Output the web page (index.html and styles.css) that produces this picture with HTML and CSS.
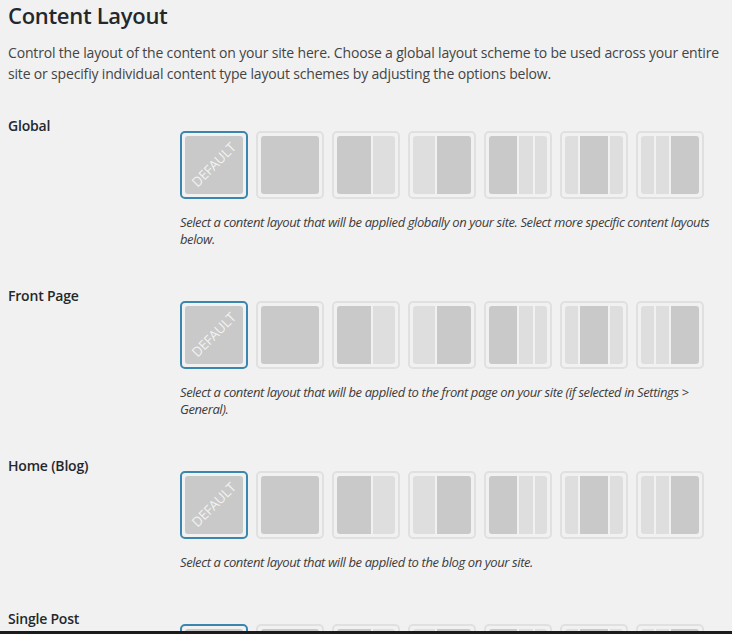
FILE: index.html
```html
<!DOCTYPE html>
<html>
<head>
<meta charset="utf-8">
<link rel="stylesheet" href="styles.css">
</head>
<body>
<div class="wrap">
  <h1 class="title">Content Layout</h1>
  <p class="intro">Control the layout of the content on your site here. Choose a global layout scheme to be used across your entire site or specifiy individual content type layout schemes by adjusting the options below.</p>

  <div class="row">
    <div class="label">Global</div>
    <div class="field">
      <div class="tiles">
        <div class="tile selected"><div class="inner"><div class="col dark full"></div><span class="default">Default</span></div></div>
        <div class="tile"><div class="inner"><div class="col dark full"></div></div></div>
        <div class="tile"><div class="inner"><div class="col dark w34"></div><div class="col light w22"></div></div></div>
        <div class="tile"><div class="inner"><div class="col light w22"></div><div class="col dark w34"></div></div></div>
        <div class="tile"><div class="inner"><div class="col dark w28"></div><div class="col light w14"></div><div class="col light w12"></div></div></div>
        <div class="tile"><div class="inner"><div class="col light w13"></div><div class="col dark w28"></div><div class="col light w13"></div></div></div>
        <div class="tile"><div class="inner"><div class="col light w13"></div><div class="col light w13"></div><div class="col dark w28"></div></div></div>
      </div>
      <p class="desc">Select a content layout that will be applied globally on your site. Select more specific content layouts below.</p>
    </div>
  </div>

  <div class="row">
    <div class="label">Front Page</div>
    <div class="field">
      <div class="tiles">
        <div class="tile selected"><div class="inner"><div class="col dark full"></div><span class="default">Default</span></div></div>
        <div class="tile"><div class="inner"><div class="col dark full"></div></div></div>
        <div class="tile"><div class="inner"><div class="col dark w34"></div><div class="col light w22"></div></div></div>
        <div class="tile"><div class="inner"><div class="col light w22"></div><div class="col dark w34"></div></div></div>
        <div class="tile"><div class="inner"><div class="col dark w28"></div><div class="col light w14"></div><div class="col light w12"></div></div></div>
        <div class="tile"><div class="inner"><div class="col light w13"></div><div class="col dark w28"></div><div class="col light w13"></div></div></div>
        <div class="tile"><div class="inner"><div class="col light w13"></div><div class="col light w13"></div><div class="col dark w28"></div></div></div>
      </div>
      <p class="desc">Select a content layout that will be applied to the front page on your site (if selected in Settings &gt; General).</p>
    </div>
  </div>

  <div class="row">
    <div class="label">Home (Blog)</div>
    <div class="field">
      <div class="tiles">
        <div class="tile selected"><div class="inner"><div class="col dark full"></div><span class="default">Default</span></div></div>
        <div class="tile"><div class="inner"><div class="col dark full"></div></div></div>
        <div class="tile"><div class="inner"><div class="col dark w34"></div><div class="col light w22"></div></div></div>
        <div class="tile"><div class="inner"><div class="col light w22"></div><div class="col dark w34"></div></div></div>
        <div class="tile"><div class="inner"><div class="col dark w28"></div><div class="col light w14"></div><div class="col light w12"></div></div></div>
        <div class="tile"><div class="inner"><div class="col light w13"></div><div class="col dark w28"></div><div class="col light w13"></div></div></div>
        <div class="tile"><div class="inner"><div class="col light w13"></div><div class="col light w13"></div><div class="col dark w28"></div></div></div>
      </div>
      <p class="desc">Select a content layout that will be applied to the blog on your site.</p>
    </div>
  </div>

  <div class="row">
    <div class="label">Single Post</div>
    <div class="field">
      <div class="tiles">
        <div class="tile selected"><div class="inner"><div class="col dark full"></div></div></div>
        <div class="tile"><div class="inner"><div class="col dark full"></div></div></div>
        <div class="tile"><div class="inner"><div class="col dark w34"></div><div class="col light w22"></div></div></div>
        <div class="tile"><div class="inner"><div class="col light w22"></div><div class="col dark w34"></div></div></div>
        <div class="tile"><div class="inner"><div class="col dark w28"></div><div class="col light w14"></div><div class="col light w12"></div></div></div>
        <div class="tile"><div class="inner"><div class="col light w13"></div><div class="col dark w28"></div><div class="col light w13"></div></div></div>
        <div class="tile"><div class="inner"><div class="col light w13"></div><div class="col light w13"></div><div class="col dark w28"></div></div></div>
      </div>
    </div>
  </div>
</div>
<div class="bottom-edge"></div>
</body>
</html>
```

FILE: styles.css
```css
html, body {
  margin: 0;
  padding: 0;
  background: #f1f1f1;
  overflow: hidden;
}
body {
  font-family: "Open Sans", "Noto Sans", "Liberation Sans", sans-serif;
  color: #444;
  height: 634px;
}
.wrap {
  padding: 0 8px;
}
.title {
  margin: 0;
  font-size: 22px;
  line-height: 30px;
  font-weight: 600;
  letter-spacing: -0.3px;
  color: #23282d;
}
.intro {
  margin: 12px 0 0;
  font-size: 14px;
  line-height: 21px;
  letter-spacing: -0.17px;
  color: #444;
}
.row {
  display: grid;
  grid-template-columns: 172px 1fr;
  margin-top: 32px;
}
.row + .row {
  margin-top: 38px;
}
.label {
  font-size: 14px;
  line-height: 20px;
  font-weight: 600;
  letter-spacing: -0.2px;
  color: #23282d;
}
.field {
  padding-top: 15px;
}
.tiles {
  display: flex;
  gap: 8px;
}
.tile {
  width: 68px;
  height: 68px;
  box-sizing: border-box;
  border: 2px solid #e0e0e0;
  border-radius: 5px;
  padding: 3px;
  background: #f1f1f1;
}
.tile.selected {
  border-color: #3a86ae;
}
.inner {
  position: relative;
  display: flex;
  gap: 2px;
  height: 100%;
  border-radius: 3px;
  overflow: hidden;
}
.col {
  height: 100%;
}
.dark { background: #c9c9c9; }
.light { background: #dedede; }
.full { flex: 1; }
.w34 { flex: 34; }
.w22 { flex: 22; }
.w28 { flex: 28; }
.w14 { flex: 14; }
.w13 { flex: 13; }
.w12 { flex: 12; }
.default {
  position: absolute;
  left: 50%;
  top: 50%;
  transform: translate(-50%, -50%) rotate(-45deg);
  color: rgba(255, 255, 255, 0.78);
  font-size: 13.5px;
  line-height: 15px;
  text-transform: uppercase;
  letter-spacing: -0.2px;
  white-space: nowrap;
}
.desc {
  margin: 15px 0 0;
  font-size: 13px;
  line-height: 17px;
  font-style: italic;
  letter-spacing: -0.4px;
  color: #3c3c3c;
}
.bottom-edge {
  position: fixed;
  left: 0;
  right: 0;
  bottom: 0;
  height: 3px;
  background: #1c1c1c;
}
```
